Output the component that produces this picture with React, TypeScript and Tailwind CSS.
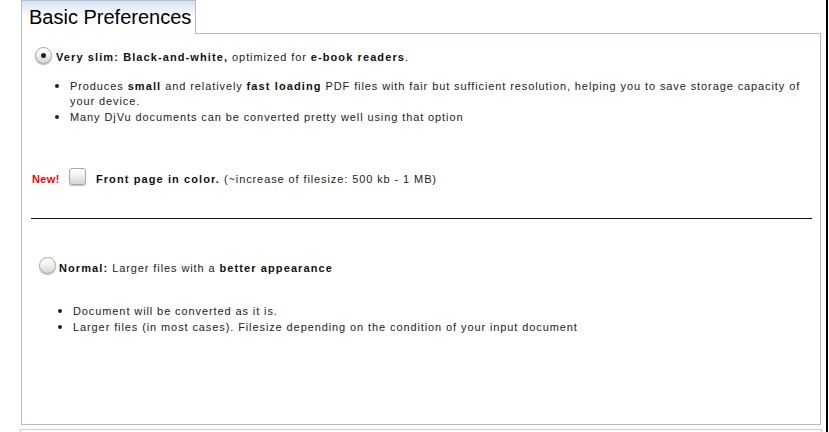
import React from 'react'

const FONT = { fontFamily: '"Liberation Sans", Arial, sans-serif' }

function Radio({ checked }: { checked?: boolean }) {
  return (
    <span className="shrink-0 w-[17px] h-[17px] rounded-full border border-[#a8a8a8] bg-linear-to-b from-white via-[#f0f0f0] to-[#d4d4d4] shadow-[0_1px_1px_rgba(0,0,0,0.3)] flex items-center justify-center">
      {checked && <span className="w-[5px] h-[5px] rounded-full bg-[#222]" />}
    </span>
  )
}

function Checkbox() {
  return (
    <span className="block shrink-0 w-[17px] h-[17px] rounded-[3px] border border-[#a8a8a8] bg-linear-to-b from-white via-[#eeeeee] to-[#d6d6d6] shadow-[0_1px_1px_rgba(0,0,0,0.25)]" />
  )
}

function B({ children }: { children: React.ReactNode }) {
  return <b className="text-[#111] tracking-[1.1px]">{children}</b>
}

export default function App() {
  return (
    <div className="w-[829px] h-[432px] flex bg-white overflow-hidden text-[#222] text-[11px] tracking-[0.9px]" style={FONT}>
      {/* ── Main column ── */}
      <div className="w-[826px] pl-[20px] flex flex-col">
        {/* Tab strip */}
        <div className="flex h-[34px] ml-px">
          <div className="w-[175px] h-[34px] border-t border-l border-r border-[#b4b9cb] bg-linear-to-b from-[#d6e2f3] via-white to-white pl-[7px] pt-[5px]">
            <span className="text-[20px] leading-[23px] tracking-normal text-black">Basic Preferences</span>
          </div>
          <div className="w-[625px] border-b border-[#b4b9cb]" />
        </div>

        {/* Panel */}
        <div className="ml-px w-[800px] h-[391px] border-l border-r border-b border-[#b4b9cb] pt-[13px]">
          <div className="flex items-center pl-[13px] h-[17px]">
            <Radio checked />
            <p className="ml-[4px] mt-[3px]">
              <B>Very slim: Black-and-white,</B> optimized for <B>e-book readers</B>.
            </p>
          </div>

          <ul className="list-disc mt-[14px] pl-[48px] pr-[14px] leading-[15px] marker:text-[14px]">
            <li>
              Produces <B>small</B> and relatively <B>fast loading</B> PDF files with fair but sufficient resolution, helping you to save storage capacity of your device.
            </li>
            <li>Many DjVu documents can be converted pretty well using that option</li>
          </ul>

          <div className="flex items-center pl-[10px] h-[17px] mt-[43px]">
            <b className="text-[#ff0000] tracking-[0.4px] mt-[5px]">New!</b>
            <span className="ml-[9px]"><Checkbox /></span>
            <p className="ml-[10px] mt-[5px]">
              <B>Front page in color.</B> (~increase of filesize: 500 kb - 1 MB)
            </p>
          </div>

          <hr className="mt-[33px] ml-[9px] mr-[8px] border-0 border-t border-[#111]" />

          <div className="flex items-center pl-[17px] h-[17px] mt-[38px]">
            <Radio />
            <p className="ml-[3px] mt-[5px]">
              <B>Normal:</B> Larger files with a <B>better appearance</B>
            </p>
          </div>

          <ul className="list-disc mt-[29px] pl-[51px] leading-[15px] marker:text-[14px]">
            <li>Document will be converted as it is.</li>
            <li>Larger files (in most cases). Filesize depending on the condition of your input document</li>
          </ul>
        </div>

        {/* Next panel, cut off */}
        <div className="mt-[4px] w-[802px] flex-1 border-t border-l border-r border-[#cccccc]" />
      </div>

      {/* Window edge */}
      <div className="w-[2px] bg-black" />
      <div className="w-px bg-white" />
    </div>
  )
}
